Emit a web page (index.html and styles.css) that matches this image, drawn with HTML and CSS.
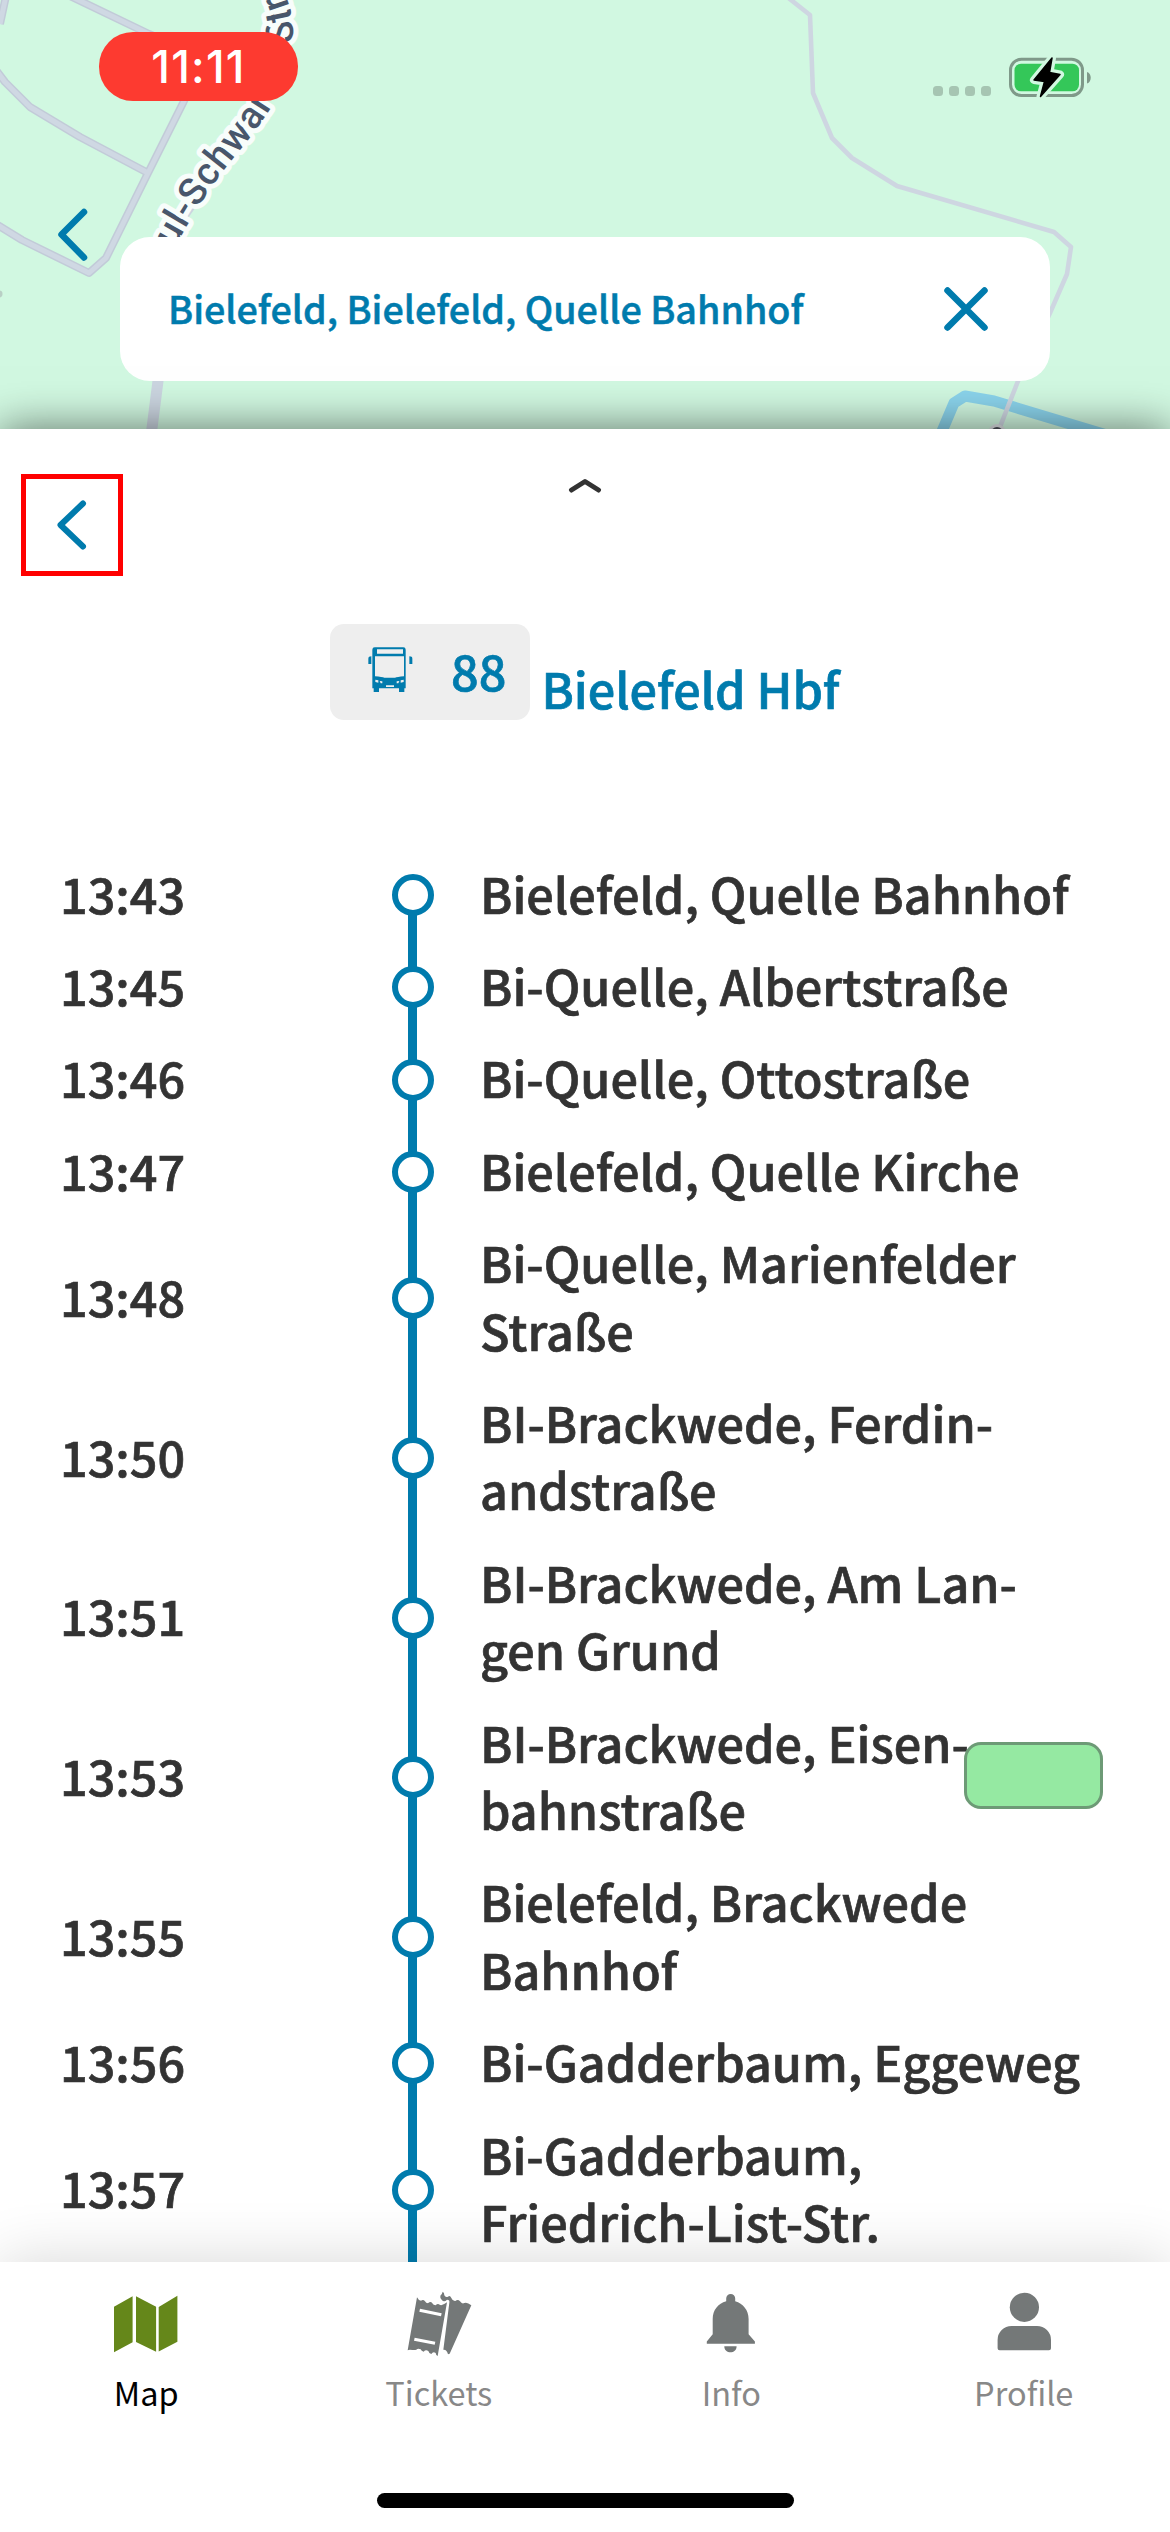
FILE: index.html
```
<!DOCTYPE html>
<html lang="en">
<head>
<meta charset="utf-8">
<title>Bielefeld Hbf</title>
<link rel="stylesheet" href="styles.css">
</head>
<body>
<div class="screen">
  <header class="map">
    <svg class="map-canvas" viewBox="0 0 1170 429" aria-hidden="true">
      <g class="road">
        <path d="M6-4 0 24"/>
        <path d="M70-4 149 34 212 62"/>
        <path d="M-4 70 5 82 30 107 80 137 148 173"/>
        <path d="M200 66 183 103 148 173 106 258 89 273 22 240-4 224"/>
      </g>
      <g class="road-fill">
        <path d="M6-4 0 24"/>
        <path d="M70-4 149 34 212 62"/>
        <path d="M-4 70 5 82 30 107 80 137 148 173"/>
        <path d="M200 66 183 103 148 173 106 258 89 273 22 240-4 224"/>
      </g>
      <path class="street" d="M151 436 158 381 166 240 215 170"/>
      <path class="water" d="M940 436 954 403 965 396 994 401 1110 436"/>
      <path class="trail" d="M786-4 810 15 813 93 832 138 852 158 897 186 1054 232 1071 247 1067 274 1050 313 1018 381 998 432"/>
      <circle class="poi-ring" cx="997" cy="433" r="9"/>
      <circle class="poi" cx="997" cy="433" r="6"/>
      <circle class="mark" cx="-1" cy="294" r="3.5"/>
      <path id="label-a" fill="none" d="M170 256 Q184 230 201 203 T240 150 T282 90"/>
      <path id="label-b" fill="none" d="M292 50 Q295 25 289 5 T270-40"/>
      <text class="street-name"><textPath href="#label-a" startOffset="9">ul-Schwar</textPath></text>
      <text class="street-name"><textPath href="#label-b" startOffset="7">Str</textPath></text>
    </svg>
    <div class="status">
      <span class="clock">11:11</span>
      <div class="indicators">
        <span class="signal"><i></i><i></i><i></i><i></i></span>
        <svg class="battery" viewBox="1005 52 90 50">
          <rect class="shell" x="1010.5" y="59.2" width="72" height="36.4" rx="11"/>
          <rect class="charge" x="1014.5" y="63.7" width="64.5" height="27.6" rx="6.5"/>
          <path class="nub" d="M1087 72c5 1.500 5 10 0 11.500z"/>
          <path class="bolt-edge" d="M1052 58 1034 80 1044.500 81.500 1040.500 96.500 1060 74.500 1049.500 72.500z"/>
          <path class="bolt" d="M1052 58 1034 80 1044.500 81.500 1040.500 96.500 1060 74.500 1049.500 72.500z"/>
        </svg>
      </div>
    </div>
    <div class="search-row">
      <svg class="back" viewBox="0 0 40 56"><path d="M32 5 9.500 27.500 32 50.500"/></svg>
      <div class="search">
        <span>Bielefeld, Bielefeld, Quelle Bahnhof</span>
        <svg class="clear" viewBox="0 0 46 46"><path d="M4.500 4.500 41.500 41.500M41.500 4.500 4.500 41.500"/></svg>
      </div>
    </div>
  </header>

  <main class="sheet">
    <svg class="grabber" viewBox="0 0 36 18"><path d="M4.500 13 18 4.500 31.500 13"/></svg>
    <button class="sheet-back" aria-label="Back"><svg viewBox="0 0 36 54"><path d="M29 5.500 6.500 27 29 48.500"/></svg></button>
    <div class="trip">
      <div class="line-badge">
        <svg class="bus" viewBox="35 35 140 150">
          <path d="M58 42h86q7 0 7 7v116h-4v11h-16v-11H71v11H55v-11h-4V49q0-7 7-7zM65 48v13h78V48zM59 69v60q22 2 28 4h32q6-2 27-4V69zM60 139v7l9 2v-7zM73 143l3 7h5v-6zM145 139v7l-9 2v-7zM132 143l-3 7h-5v-6zM92 156v5h24v-5z" fill-rule="evenodd"/>
          <path d="M48 69q-9 0-9 7v16h9zM162 69q9 0 9 7v16h-9z"/>
        </svg>
        <span>88</span>
      </div>
      <h1>Bielefeld Hbf</h1>
    </div>
    <ol class="stops">
      <li><time>13:43</time><i class="node"></i><span>Bielefeld, Quelle Bahnhof</span></li>
      <li><time>13:45</time><i class="node"></i><span>Bi-Quelle, Albertstraße</span></li>
      <li><time>13:46</time><i class="node"></i><span>Bi-Quelle, Ottostraße</span></li>
      <li><time>13:47</time><i class="node"></i><span>Bielefeld, Quelle Kirche</span></li>
      <li><time>13:48</time><i class="node"></i><span>Bi-Quelle, Marienfelder<br>Straße</span></li>
      <li><time>13:50</time><i class="node"></i><span>BI-Brackwede, Ferdin-<br>andstraße</span></li>
      <li><time>13:51</time><i class="node"></i><span>BI-Brackwede, Am Lan-<br>gen Grund</span></li>
      <li><time>13:53</time><i class="node"></i><span>BI-Brackwede, Eisen-<br>bahnstraße</span><b class="chip"></b></li>
      <li><time>13:55</time><i class="node"></i><span>Bielefeld, Brackwede<br>Bahnhof</span></li>
      <li><time>13:56</time><i class="node"></i><span>Bi-Gadderbaum, Eggeweg</span></li>
      <li><time>13:57</time><i class="node"></i><span>Bi-Gadderbaum,<br>Friedrich-List-Str.</span></li>
    </ol>
  </main>

  <nav class="tabs">
    <div class="tab-list">
      <a class="tab active">
        <svg viewBox="0 0 80 80"><path d="M8 21.700 26.600 11.300V57.300L8 67.300zM30 11.300 50.100 21.700V66.700L30 57zM52.700 22 71.400 10.700V56.700L52.700 66.500z"/></svg>
        <span>Map</span>
      </a>
      <a class="tab">
        <svg viewBox="-4 0 240 240">
          <path d="M50 37q4 9 12 10 7-5 12 2 3 6 9 6 8-8 13 0 3 6 10 6 6-7 12-2 6 5 22-7L112 213q-5-1-6-9-8-5-13 3-7-1-9-9-8-5-14 2-7-1-9-7-8-4-13 1-5 2-12 1q-10-2-14 1zM59 71l-2 9 65 14 2-9zM43 158l-2 9 62 12 2-9z" fill-rule="evenodd"/>
          <path d="M127 20q5 2 5 11 4 8 11 4 6-5 10 4 4 10 12 9 8-6 14 1 6 9 13 5 8-4 21 7L148 206l-5 2q-3-15-14-14L147 53q2-9-7-9-8 8-15 2-7-6-5-14 5-3 7-12z"/>
        </svg>
        <span>Tickets</span>
      </a>
      <a class="tab">
        <svg viewBox="0 0 80 80"><path d="M35.200 16.200V13.500a4.500 4.500 0 0 1 9 0V16.200C52 18.500 57.600 25 57.600 34V49.300L63.900 56.500V58.700H15.800V56.500L21.700 49.300V34C21.700 25 27 18.500 35.200 16.200zM33.300 61.300H45.600C45.600 69.300 33.300 69.300 33.300 61.300z"/></svg>
        <span>Info</span>
      </a>
      <a class="tab">
        <svg viewBox="0 0 80 80"><circle cx="40.400" cy="22.300" r="14.600"/><path d="M13.600 55a14 14 0 0 1 14-14H53a14 14 0 0 1 14 14v8.300a2 2 0 0 1-2 2H15.600a2 2 0 0 1-2-2z"/></svg>
        <span>Profile</span>
      </a>
    </div>
    <div class="home-indicator"></div>
  </nav>
</div>
</body>
</html>
```
FILE: styles.css
```
:root {
  --blue: #007bad;
  --text: #333;
  --grey: #747878;
}

* { box-sizing: border-box; }

body {
  margin: 0;
  font-family: "Noto Sans CJK JP", "Noto Sans", sans-serif;
  color: var(--text);
  background: #fff;
}

.screen {
  width: 1170px;
  height: 2532px;
  display: flex;
  flex-direction: column;
  overflow: hidden;
}

/* Map header */
.map {
  position: relative;
  height: 429px;
  flex: none;
  background: #d1f8e1;
}
.map-canvas {
  position: absolute;
  inset: 0;
  width: 1170px;
  height: 429px;
}
.road, .road-fill, .trail, .water, .street { fill: none; stroke-linejoin: round; }
.road { stroke: #c2cbd8; stroke-width: 8; }
.road-fill { stroke: #cfd8e3; stroke-width: 5; }
.street { stroke: #cbd5e0; stroke-width: 11; }
.trail { stroke: #ced6e1; stroke-width: 4.600; }
.water { stroke: #8bd4ec; stroke-width: 11; }
.poi-ring { fill: #dfe3e6; }
.poi { fill: #4a4f57; }
.mark { fill: #b9cfc5; }
.street-name {
  font: 500 38px Roboto, sans-serif;
  letter-spacing: .800px;
  fill: #48566b;
  stroke: #f8fdfb;
  stroke-width: 10px;
  stroke-linejoin: round;
  paint-order: stroke;
}

.status {
  position: relative;
  display: flex;
  justify-content: space-between;
  height: 237px;
  padding: 32px 75px 0 99px;
}
.clock {
  width: 199px;
  height: 69px;
  border-radius: 34px;
  background: #fd3a30;
  color: #fff;
  font: 500 45px/70px Inter, sans-serif;
  letter-spacing: 1.200px;
  text-align: center;
}
.indicators {
  display: flex;
  align-items: flex-start;
  gap: 14px;
  padding-top: 20px;
}
.signal {
  display: flex;
  gap: 6px;
  padding-top: 34px;
}
.signal i {
  width: 10px;
  height: 10px;
  border-radius: 3.500px;
  background: #a6c5b2;
}
.battery { width: 90px; height: 50px; }
.shell { fill: none; stroke: #7f9989; stroke-width: 3; }
.charge { fill: #34c759; }
.nub { fill: #7f9989; }
.bolt-edge { fill: none; stroke: #d1f8e1; stroke-width: 8; stroke-linejoin: round; }
.bolt { fill: #000; stroke: #000; stroke-width: 1.500; stroke-linejoin: round; }

.search-row {
  position: relative;
  display: flex;
  padding-left: 52px;
}
.back {
  width: 40px;
  height: 56px;
  margin: -30px 28px 0 0;
}
.back path, .clear path, .sheet-back path {
  fill: none;
  stroke: var(--blue);
  stroke-width: 6.500;
  stroke-linecap: round;
  stroke-linejoin: round;
}
.search {
  width: 930px;
  height: 144px;
  display: flex;
  align-items: center;
  justify-content: space-between;
  padding: 0 61px 0 48px;
  border-radius: 30px;
  background: #fff;
  color: var(--blue);
  font-size: 37.700px;
  font-weight: 500;
  -webkit-text-stroke: .5px;
}
.search span { padding-bottom: 3px; }
.clear { width: 46px; height: 46px; }

/* Trip sheet */
.sheet {
  position: relative;
  height: 1833px;
  flex: none;
  background: #fff;
  box-shadow: 0 0 42px rgba(0, 0, 0, .55);
}
.grabber {
  display: block;
  width: 36px;
  height: 18px;
  margin: 0 auto;
  position: relative;
  top: 48px;
}
.grabber path {
  fill: none;
  stroke: var(--text);
  stroke-width: 5;
  stroke-linecap: round;
  stroke-linejoin: round;
}
.sheet-back {
  position: absolute;
  left: 21px;
  top: 45px;
  width: 102px;
  height: 102px;
  padding: 0 0 0 28px;
  border: 5px solid #f00;
  background: none;
  display: flex;
  align-items: center;
}
.sheet-back svg { width: 36px; height: 54px; }
.sheet-back path { stroke-width: 6; }

.trip {
  display: flex;
  justify-content: center;
  gap: 11px;
  padding-top: 177px;
  color: var(--blue);
  font-weight: 500;
  -webkit-text-stroke: .7px;
}
.line-badge {
  width: 200px;
  height: 96px;
  display: flex;
  align-items: center;
  justify-content: space-between;
  padding: 0 24px 4px 37px;
  border-radius: 14px;
  background: #eee;
  font-size: 48.500px;
}
.bus { width: 46.700px; height: 50px; fill: var(--blue); }
.trip h1 {
  margin: 29px 0 0;
  font-size: 48.500px;
  line-height: 70px;
  font-weight: 500;
}

.stops {
  margin: 125.800px 0 0;
  padding: 0;
  list-style: none;
  font-size: 48.550px;
  line-height: 67.600px;
  font-weight: 500;
  -webkit-text-stroke: .7px;
}
.stops li {
  position: relative;
  display: grid;
  grid-template-columns: 332px 88px 1fr;
  align-items: center;
  padding-left: 60px;
}
.stops time, .stops li > span {
  padding: 11px 0 13.700px;
  white-space: nowrap;
}
.node {
  position: relative;
  width: 42px;
  height: 42px;
  border: 6px solid var(--blue);
  border-radius: 50%;
  background: #fff;
}
/* Connector running behind the stop markers */
.stops li::before {
  content: "";
  position: absolute;
  left: 408px;
  top: 0;
  bottom: 0;
  width: 9px;
  background: var(--blue);
}
.stops li:first-child::before { top: 50%; }
.chip {
  position: absolute;
  left: 964px;
  top: 44px;
  width: 139px;
  height: 67px;
  border: 3px solid #6d9a76;
  border-radius: 17px;
  background: #95e9a2;
}

/* Bottom navigation */
.tabs {
  position: relative;
  height: 270px;
  flex: none;
  background: #fff;
  box-shadow: 0 0 58px rgba(0, 0, 0, .16);
}
.tab-list {
  display: grid;
  grid-template-columns: repeat(4, 1fr);
  padding-top: 23px;
}
.tab {
  display: flex;
  flex-direction: column;
  align-items: center;
  color: #888;
  font-size: 32.500px;
  line-height: 48px;
}
.tab svg { width: 80px; height: 80px; fill: var(--grey); }
.tab span { margin-top: 3px; }
.tab.active { color: #000; }
.tab.active svg { fill: #65871a; }
.home-indicator {
  width: 417px;
  height: 15px;
  margin: 77px auto 0;
  border-radius: 8px;
  background: #000;
}
```
